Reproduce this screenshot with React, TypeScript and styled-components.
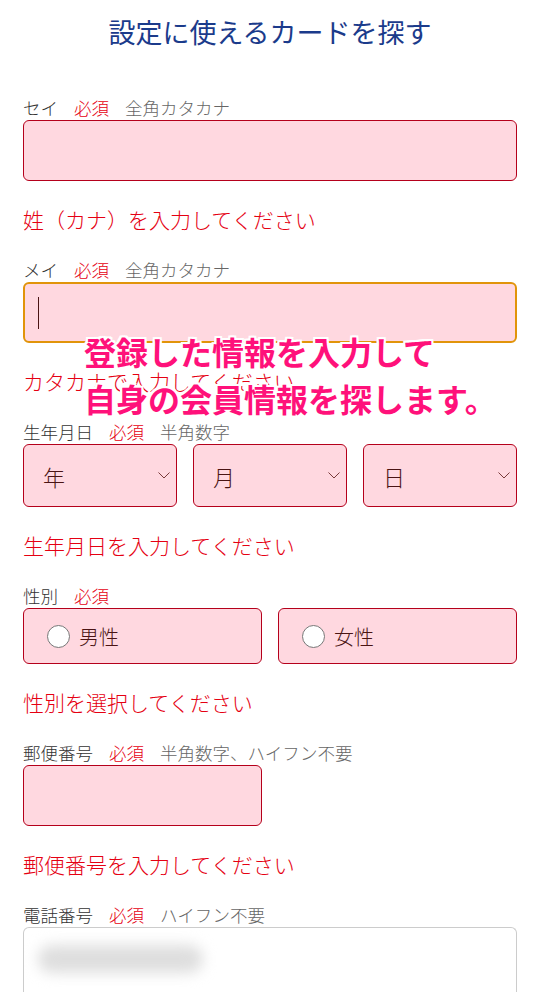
import styled, { createGlobalStyle } from 'styled-components'

const GlobalStyle = createGlobalStyle`
  html, body {
    margin: 0;
    padding: 0;
    background: #ffffff;
  }

  body {
    font-family: "Noto Sans CJK JP", "Noto Sans", sans-serif;
    font-weight: 300;
  }
`

const colors = {
  title: '#1b3b8b',
  label: '#333333',
  hint: '#666666',
  error: '#e50012',
  fieldBg: '#ffd8e0',
  fieldBorder: '#b5001b',
  focus: '#e1940a',
  fieldText: '#4a1414'
}

interface FieldProps {
  label: string
  hint?: string
  error: string
  children: React.ReactNode
}

function Field ({ label, hint, error, children }: FieldProps): JSX.Element {
  return (
    <FieldStyledContainer>
      <LabelRow>
        <span>{label}</span>
        <Required>必須</Required>
        {hint && <Hint>{hint}</Hint>}
      </LabelRow>
      {children}
      {error && <ErrorText>{error}</ErrorText>}
    </FieldStyledContainer>
  )
}

function Chevron (): JSX.Element {
  return (
    <svg width='12' height='7' viewBox='0 0 12 7' fill='none'>
      <path d='M0.5 0.5l5.5 5.5 5.5-5.5' stroke='#7a3a3a' strokeWidth='1' />
    </svg>
  )
}

export default function App (): JSX.Element {
  return (
    <>
      <GlobalStyle />
      <Page>
        <Title>設定に使えるカードを探す</Title>

        <Field label='セイ' hint='全角カタカナ' error='姓（カナ）を入力してください'>
          <TextBox />
        </Field>

        <Field label='メイ' hint='全角カタカナ' error='カタカナで入力してください'>
          <TextBox $focused>
            <Caret />
          </TextBox>
        </Field>

        <Field label='生年月日' hint='半角数字' error='生年月日を入力してください'>
          <SelectRow>
            {['年', '月', '日'].map((v) => (
              <SelectBox key={v}>
                <span>{v}</span>
                <Chevron />
              </SelectBox>
            ))}
          </SelectRow>
        </Field>

        <Field label='性別' error='性別を選択してください'>
          <RadioRow>
            {['男性', '女性'].map((v) => (
              <RadioBox key={v}>
                <RadioCircle />
                <span>{v}</span>
              </RadioBox>
            ))}
          </RadioRow>
        </Field>

        <Field label='郵便番号' hint='半角数字、ハイフン不要' error='郵便番号を入力してください'>
          <TextBox $half />
        </Field>

        <Field label='電話番号' hint='ハイフン不要' error=''>
          <PhoneBox>
            <Blurred />
          </PhoneBox>
        </Field>

        <Overlay>
          <span>登録した情報を入力して</span>
          <span>自身の会員情報を探します。</span>
        </Overlay>
      </Page>
    </>
  )
}

const Page = styled.div`
  position: relative;
  display: flex;
  flex-direction: column;
  gap: 24px;

  width: 540px;
  height: 992px;
  padding: 13px 23px 0;
  box-sizing: border-box;
  overflow: hidden;
`

const Title = styled.h1`
  margin: 0 0 20px;

  font-size: 27px;
  font-weight: 400;
  line-height: 38px;
  text-align: center;
  color: ${colors.title};
`

const FieldStyledContainer = styled.div`
  display: flex;
  flex-direction: column;
`

const LabelRow = styled.div`
  display: flex;
  align-items: center;
  gap: 16px;

  height: 24px;
  margin-bottom: 1px;

  font-size: 17.5px;
  color: ${colors.label};
`

const Required = styled.span`
  color: ${colors.error};
`

const Hint = styled.span`
  color: ${colors.hint};
`

const ErrorText = styled.div`
  margin-top: 24px;

  font-size: 21px;
  line-height: 28px;
  color: ${colors.error};
`

const TextBox = styled.div<{ $focused?: boolean, $half?: boolean }>`
  display: flex;
  align-items: center;

  width: ${({ $half }) => ($half ? '239px' : '494px')};
  height: 61px;
  padding-left: 13px;
  box-sizing: border-box;
  border: ${({ $focused }) => ($focused ? `2px solid ${colors.focus}` : `1px solid ${colors.fieldBorder}`)};
  border-radius: 6px;

  background: ${colors.fieldBg};
`

const Caret = styled.div`
  width: 1px;
  height: 32px;
  background: ${colors.fieldText};
`

const SelectRow = styled.div`
  display: grid;
  grid-template-columns: repeat(3, 1fr);
  gap: 16px;
`

const SelectBox = styled.div`
  display: flex;
  align-items: center;
  justify-content: space-between;

  height: 63px;
  padding: 0 6px 0 19px;
  box-sizing: border-box;
  border: 1px solid ${colors.fieldBorder};
  border-radius: 6px;

  background: ${colors.fieldBg};
  font-size: 22px;
  color: ${colors.fieldText};
`

const RadioRow = styled.div`
  display: grid;
  grid-template-columns: repeat(2, 1fr);
  gap: 16px;
`

const RadioBox = styled.div`
  display: flex;
  align-items: center;
  gap: 9px;

  height: 56px;
  padding-left: 23px;
  box-sizing: border-box;
  border: 1px solid ${colors.fieldBorder};
  border-radius: 6px;

  background: ${colors.fieldBg};
  font-size: 20px;
  color: ${colors.fieldText};
`

const RadioCircle = styled.div`
  width: 21px;
  height: 21px;
  border: 1px solid #777777;
  border-radius: 50%;

  background: #ffffff;
`

const PhoneBox = styled.div`
  height: 70px;
  padding: 12px 10px;
  box-sizing: border-box;
  border: 1px solid #cccccc;
  border-bottom: none;
  border-radius: 6px 6px 0 0;

  background: #ffffff;
`

const Blurred = styled.div`
  width: 165px;
  height: 28px;
  margin: 5px 0 0 4px;
  border-radius: 14px;

  background: #dedede;
  filter: blur(7px);
`

const Overlay = styled.div`
  position: absolute;
  top: 328px;
  left: 84px;
  display: flex;
  flex-direction: column;

  font-size: 32px;
  font-weight: 700;
  line-height: 47px;
  white-space: nowrap;
  color: #ff117a;
  text-shadow:
    -2px -2px 0 #fff, 2px -2px 0 #fff, -2px 2px 0 #fff, 2px 2px 0 #fff,
    0 -2px 0 #fff, 0 2px 0 #fff, -2px 0 0 #fff, 2px 0 0 #fff;
`
